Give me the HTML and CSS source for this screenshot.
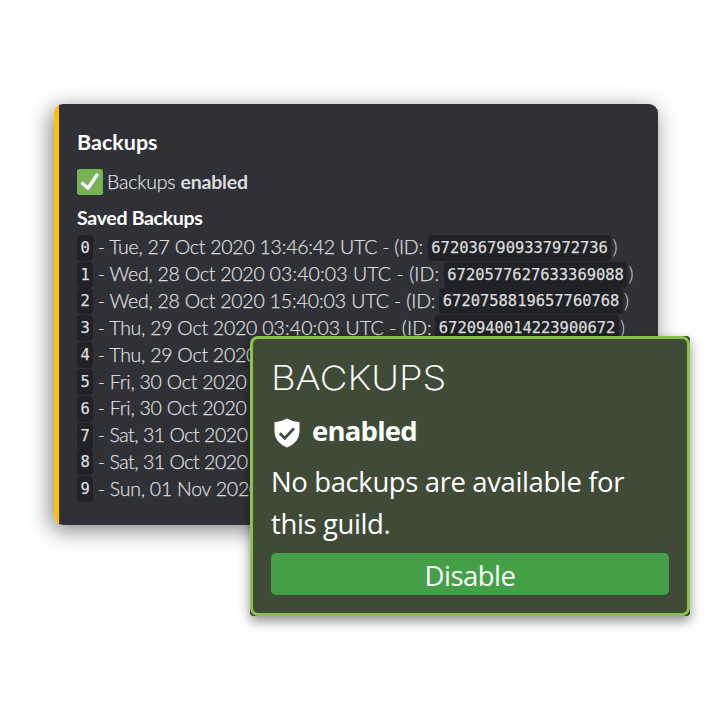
FILE: index.html
```html
<!DOCTYPE html>
<html lang="en">
<head>
<meta charset="utf-8">
<title>Backups</title>
<link rel="stylesheet" href="styles.css">
</head>
<body>
<section class="embed">
  <h1 class="title">Backups</h1>
  <p class="status">
    <svg class="check" viewBox="0 0 26 26"><rect width="26" height="26" rx="2.5" fill="#77b255"/><path d="M5.5 14.5 11 19.3 20 6" fill="none" stroke="#fff" stroke-width="3.4" stroke-linecap="round" stroke-linejoin="round"/></svg>
    <span>Backups <b>enabled</b></span>
  </p>
  <h2 class="subtitle">Saved Backups</h2>
  <ul class="list">
    <li><code>0</code><span class="date r0">- Tue, 27 Oct 2020 <span>13:46:42 UTC - (ID:</span></span><code>6720367909337972736</code><span class="end">)</span></li>
    <li><code>1</code><span class="date r1">- Wed, 28 Oct 2020 <span>03:40:03 UTC - (ID:</span></span><code>6720577627633369088</code><span class="end">)</span></li>
    <li><code>2</code><span class="date r2">- Wed, 28 Oct 2020 <span>15:40:03 UTC - (ID:</span></span><code>6720758819657760768</code><span class="end">)</span></li>
    <li><code>3</code><span class="date r3">- Thu, 29 Oct 2020 <span>03:40:03 UTC - (ID:</span></span><code>6720940014223900672</code><span class="end">)</span></li>
    <li><code>4</code><span class="date">- Thu, 29 Oct 2020</span></li>
    <li><code>5</code><span class="date">- Fri, 30 Oct 2020</span></li>
    <li><code>6</code><span class="date">- Fri, 30 Oct 2020</span></li>
    <li><code>7</code><span class="date sat">- Sat, 31 Oct 2020</span></li>
    <li><code>8</code><span class="date sat">- Sat, 31 Oct 2020</span></li>
    <li><code>9</code><span class="date">- Sun, 01 Nov 2020</span></li>
  </ul>
</section>
<section class="panel">
  <div class="panel-body">
    <h2 class="heading">BACKUPS</h2>
    <div class="state">
      <svg class="shield" viewBox="0 0 26 30"><path d="M13 .5 Q19 4 25.5 4.2 V14 Q25 24.5 13 29.5 Q1 24.5 .5 14 V4.2 Q7 4 13 .5Z" fill="#fff"/><path d="m5.8 15.2 5 5L20 10.4" fill="none" stroke="#404b37" stroke-width="2.7"/></svg>
      <b>enabled</b>
    </div>
    <p class="message">No backups are available for<br>this guild.</p>
    <button class="disable">Disable</button>
  </div>
</section>
</body>
</html>
```
FILE: styles.css
```css
* { box-sizing: border-box; margin: 0; padding: 0; }
body { width: 720px; height: 720px; background: #fff; overflow: hidden; position: relative; }
.embed {
  width: 604px; height: 421px; margin: 104px 0 0 54px; padding: 25px 0 0 23px;
  border-radius: 9px; background: linear-gradient(to right, #ffc107 5.5px, #303136 5.5px);
  box-shadow: -3px 5px 22px rgba(0,0,0,.5);
  font: 300 19.5px/26.85px Lato, sans-serif; color: #dcddde;
}
.title { font-size: 21.5px; line-height: 26px; font-weight: 700; color: #fff; }
.status { display: flex; align-items: center; height: 26px; margin-top: 14px; gap: 4px; -webkit-text-stroke: .25px; }
.status span { letter-spacing: -.2px; padding-top: 1px; }
.status b { font-weight: 700; -webkit-text-stroke: 0; }
.check { width: 26px; height: 26px; }
.subtitle { font-size: 19.5px; line-height: 26px; font-weight: 700; letter-spacing: -.3px; color: #fff; margin-top: 10px; }
.list { list-style: none; margin-top: 3.3px; }
.list li { display: flex; align-items: center; height: 26.85px; white-space: nowrap; }
.list code { font: 400 15.45px/27px "DejaVu Sans Mono", monospace; background: #202225; border-radius: 4px; padding: 0 3.5px; height: 26px; -webkit-text-stroke: .25px; }
.date { margin-left: 4.5px; letter-spacing: -.24px; -webkit-text-stroke: .25px; }
.date.sat { letter-spacing: -.46px; }
.r0 { width: 330px; }
.r0 span { letter-spacing: -.23px; }
.r1 { width: 346px; }
.r1 span { letter-spacing: .1px; }
.r2 { width: 341.5px; }
.r2 span { letter-spacing: -.1px; }
.r3 { width: 337.5px; }
.r3 span { letter-spacing: .1px; }
.end { margin-left: 1px; }
.panel {
  position: absolute; left: 250px; top: 336px; width: 440px; height: 280px;
  background: #34383a; border-radius: 4px; box-shadow: 0 5px 12px rgba(0,0,0,.45);
}
.panel-body {
  height: 100%; padding: 20px 18px; border: 3.5px solid #8bc34a; border-radius: 8px;
  background: #404b37; color: #fff; font: 400 27.5px/42px "Open Sans", sans-serif; letter-spacing: -.39px;
}
.heading { font: 200 33.5px/36px Inter, sans-serif; letter-spacing: 0; transform: scaleX(1.14); transform-origin: 0 0; padding-top: 1px; -webkit-text-stroke: .2px; }
.state { display: flex; align-items: center; gap: 12px; height: 42px; margin: 14px 0 0 3px; }
.state b { font-weight: 700; letter-spacing: -.8px; }
.shield { width: 26px; height: 30px; margin-top: 3px; }
.message { margin-top: 9px; }
.disable { display: block; width: 398px; height: 42px; padding-top: 2px; margin-top: 8px; border: 0; border-radius: 5px; background: #43a047; color: #fff; font: inherit; letter-spacing: -.5px; }
```
